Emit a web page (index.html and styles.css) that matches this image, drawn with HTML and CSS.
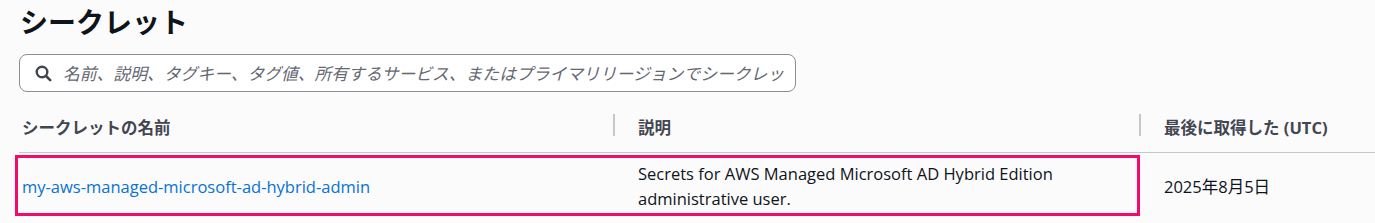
FILE: index.html
```html
<!DOCTYPE html>
<html lang="ja">
<head>
<meta charset="utf-8">
<title>シークレット</title>
<link rel="stylesheet" href="styles.css">
</head>
<body>
<main class="page">
  <h1 class="title">シークレット</h1>
  <div class="search">
    <svg class="search-icon" width="17" height="17" viewBox="0 0 17 17" aria-hidden="true">
      <circle cx="7" cy="7" r="5.3" fill="none" stroke="currentColor" stroke-width="2.4"/>
      <path d="M11 11 L15.2 15.2" stroke="currentColor" stroke-width="2.6" stroke-linecap="round"/>
    </svg>
    <span class="placeholder">名前、説明、タグキー、タグ値、所有するサービス、またはプライマリリージョンでシークレットを検索</span>
  </div>
  <div class="table">
    <div class="thead">
      <div class="th th-name">シークレットの名前</div>
      <div class="th th-desc">説明</div>
      <div class="th th-date">最後に取得した (UTC)</div>
    </div>
    <div class="tr">
      <div class="td td-name"><a class="link" href="#">my-aws-managed-microsoft-ad-hybrid-admin</a></div>
      <div class="td td-desc">Secrets for AWS Managed Microsoft AD Hybrid Edition<br>administrative user.</div>
      <div class="td td-date">2025年8月5日</div>
      <div class="highlight"></div>
    </div>
  </div>
</main>
</body>
</html>
```
FILE: styles.css
```css
html, body {
  margin: 0;
  padding: 0;
  background: #fbfbfc;
}
body {
  font-family: "Open Sans", "Noto Sans CJK JP", sans-serif;
  color: #0f141a;
}
.page {
  padding: 4px 0 0 19px;
}
.title {
  margin: 0 0 14px 1px;
  font-size: 28px;
  line-height: 36px;
  font-weight: 700;
  color: #0f141a;
}
.search {
  box-sizing: border-box;
  width: 777px;
  height: 38px;
  border: 1px solid #8c8c94;
  border-radius: 8px;
  background: #ffffff;
  display: flex;
  align-items: center;
  padding: 0 6px 0 15px;
  gap: 11px;
  overflow: hidden;
}
.search-icon {
  flex: none;
  color: #424650;
}
.placeholder {
  font-style: italic;
  font-size: 16.8px;
  color: #656871;
  white-space: nowrap;
  overflow: hidden;
  text-overflow: clip;
}
.table {
  margin-top: 20px;
}
.thead {
  display: grid;
  grid-template-columns: 594px 526px 1fr;
  border-bottom: 1px solid #c6c6cd;
  height: 40px;
  align-items: start;
}
.th {
  font-size: 16.5px;
  font-weight: 700;
  color: #424650;
  line-height: 26px;
  padding-top: 3px;
}
.th-name { padding-left: 3px; }
.th-desc, .th-date {
  padding-left: 25px;
  position: relative;
}
.th-desc::before, .th-date::before {
  content: "";
  position: absolute;
  left: 0;
  top: 2px;
  width: 2px;
  height: 22px;
  background: #c6c6cd;
}
.tr {
  position: relative;
  display: grid;
  grid-template-columns: 594px 526px 1fr;
  align-items: center;
  padding: 8px 0 10px;
}
.td {
  font-size: 16.5px;
  line-height: 25px;
  color: #0f141a;
}
.td-name { padding-left: 3px; }
.td-desc, .td-date { padding-left: 25px; }
.link {
  color: #0972d3;
  text-decoration: none;
}
.highlight {
  position: absolute;
  left: -4px;
  top: 2px;
  width: 1125px;
  height: 61px;
  box-sizing: border-box;
  border: 3px solid #f50a6b;
  pointer-events: none;
}
```
